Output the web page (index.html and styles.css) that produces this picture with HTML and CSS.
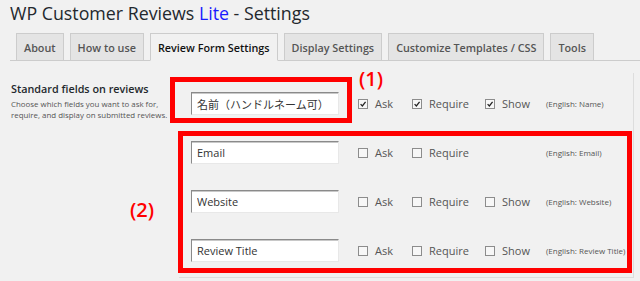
FILE: index.html
```html
<!DOCTYPE html>
<html lang="ja">
<head>
    <meta charset="UTF-8">
    <title>WP Customer Reviews Lite - Settings</title>
    <link rel="stylesheet" href="styles.css">
</head>
<body>
<div class="wrap">
    <h1>WP Customer Reviews <span class="lite">Lite</span> - Settings</h1>
    <nav class="tabs">
        <a class="tab">About</a>
        <a class="tab">How to use</a>
        <a class="tab active">Review Form Settings</a>
        <a class="tab">Display Settings</a>
        <a class="tab">Customize Templates / CSS</a>
        <a class="tab">Tools</a>
    </nav>

    <div class="settings">
        <div class="label-col">
            <h3>Standard fields on reviews</h3>
            <p>Choose which fields you want to ask for,<br>require, and display on submitted reviews.</p>
        </div>
        <div class="fields">
            <div class="row">
                <input class="field" type="text" value="名前（ハンドルネーム可）">
                <label class="opt ask"><span class="box checked"><svg viewBox="0 0 10 10"><path d="M2 5.2 L4.2 7.4 L8.2 2.4"/></svg></span>Ask</label>
                <label class="opt req"><span class="box checked"><svg viewBox="0 0 10 10"><path d="M2 5.2 L4.2 7.4 L8.2 2.4"/></svg></span>Require</label>
                <label class="opt show"><span class="box checked"><svg viewBox="0 0 10 10"><path d="M2 5.2 L4.2 7.4 L8.2 2.4"/></svg></span>Show</label>
                <small>(English: Name)</small>
            </div>
            <div class="row">
                <input class="field" type="text" value="Email">
                <label class="opt ask"><span class="box"></span>Ask</label>
                <label class="opt req"><span class="box"></span>Require</label>
                <span class="opt show"></span>
                <small>(English: Email)</small>
            </div>
            <div class="row">
                <input class="field" type="text" value="Website">
                <label class="opt ask"><span class="box"></span>Ask</label>
                <label class="opt req"><span class="box"></span>Require</label>
                <label class="opt show"><span class="box"></span>Show</label>
                <small>(English: Website)</small>
            </div>
            <div class="row">
                <input class="field" type="text" value="Review Title">
                <label class="opt ask"><span class="box"></span>Ask</label>
                <label class="opt req"><span class="box"></span>Require</label>
                <label class="opt show"><span class="box"></span>Show</label>
                <small>(English: Review Title)</small>
            </div>
        </div>
    </div>

    <!-- annotations -->
    <div class="mark mark-1"></div>
    <div class="mark mark-2"></div>
    <span class="note note-1">(1)</span>
    <span class="note note-2">(2)</span>
</div>
</body>
</html>
```

FILE: styles.css
```css
body {
    margin: 0;
    background: #f1f1f1;
    font-family: 'Open Sans', 'Noto Sans CJK JP', sans-serif;
    color: #444;
}
.wrap {
    position: relative;
    width: 640px;
    height: 281px;
    overflow: hidden;
}
h1 {
    margin: 0;
    padding-left: 10px;
    font-size: 17.8px;
    font-weight: 400;
    line-height: 26px;
    color: #23282d;
}
.lite {
    color: #1a1aff;
}
.tabs {
    display: flex;
    margin: 7px 0 0 10px;
    padding-left: 6px;
    border-bottom: 1px solid #ccc;
}
.tab {
    height: 26px;
    padding: 0 7px;
    margin-right: 6px;
    margin-bottom: -1px;
    border: 1px solid #ccc;
    border-bottom: none;
    background: #e4e4e4;
    font-size: 10.8px;
    font-weight: 600;
    line-height: 27px;
    color: #555;
    white-space: nowrap;
}
.tab.active {
    background: #f1f1f1;
    color: #111;
    border-bottom: 1px solid #f1f1f1;
}
.settings {
    display: flex;
    padding-top: 12px;
}
.label-col {
    width: 179px;
    padding: 8px 0 0 11px;
    box-sizing: border-box;
}
.label-col h3 {
    margin: 0;
    font-size: 10.8px;
    font-weight: 600;
    line-height: 16px;
    color: #23282d;
}
.label-col p {
    margin: 2px 0 0;
    font-size: 7.9px;
    line-height: 11px;
    color: #555;
    white-space: nowrap;
}
.fields {
    width: 442px;
    padding: 6px 0 2px 12px;
    border-right: 1px solid #ddd;
    border-bottom: 1px solid #ddd;
}
.row {
    display: flex;
    align-items: center;
    height: 49px;
}
.field {
    width: 148px;
    height: 23px;
    box-sizing: border-box;
    margin: 0 19px 0 0;
    padding: 0 5px;
    border: 1px solid #e8e8e8;
    border-top-color: #8a8a8a;
    border-left-color: #8a8a8a;
    box-shadow: inset 0 1px 0 #c8c8c8;
    background: #fff;
    font-family: 'Open Sans', 'Noto Sans CJK JP', sans-serif;
    font-size: 11px;
    color: #333;
}
.opt {
    display: flex;
    align-items: center;
    font-size: 11px;
    color: #555;
}
.ask { width: 54px; }
.req { width: 73px; }
.show { width: 61px; }
.box {
    width: 10px;
    height: 10px;
    margin-right: 7px;
    border: 1px solid #8c8c8c;
    background: #f7f7f7;
    box-sizing: border-box;
}
.box svg {
    display: block;
    width: 100%;
    height: 100%;
}
.box svg path {
    fill: none;
    stroke: #222;
    stroke-width: 1.6;
}
small {
    font-size: 8px;
    color: #555;
    white-space: nowrap;
}
.mark {
    position: absolute;
    border: 5px solid #ff0000;
    box-sizing: border-box;
}
.mark-1 {
    left: 170px;
    top: 77px;
    width: 182px;
    height: 46px;
}
.mark-2 {
    left: 178px;
    top: 131px;
    width: 454px;
    height: 142px;
}
.note {
    position: absolute;
    font-size: 20px;
    font-weight: 600;
    color: #ff0000;
    line-height: 22px;
}
.note-1 {
    left: 359px;
    top: 68px;
}
.note-2 {
    left: 130px;
    top: 199px;
}
```
